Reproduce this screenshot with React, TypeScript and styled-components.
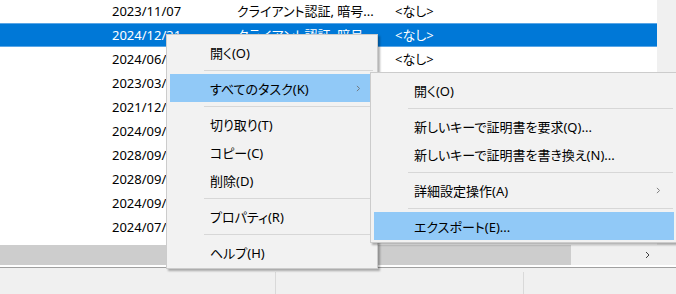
import React from "react";
import styled, { createGlobalStyle } from "styled-components";

const GlobalStyle = createGlobalStyle`
  html, body {
    margin: 0;
    padding: 0;
    background: #f0f0f0;
  }
`;

const Window = styled.div`
  position: relative;
  width: 676px;
  height: 294px;
  overflow: hidden;
  display: flex;
  flex-direction: column;
  background: #f0f0f0;
  font-family: "Noto Sans", "Noto Sans CJK JP", sans-serif;
  font-size: 13px;
  color: #000;
`;

const ListFrame = styled.div`
  display: flex;
  flex-direction: column;
  height: 268px;
  box-sizing: border-box;
  background: #fff;
  padding-bottom: 2px;
  border-bottom: 1px solid #a0a0a0;
`;

const ListBody = styled.div`
  display: flex;
  height: 245px;
`;

const Rows = styled.div`
  flex: 1;
  overflow: hidden;
  padding-top: 0;
`;

const RowsInner = styled.div`
  margin-top: -1px;
`;

const Row = styled.div<{ $selected?: boolean }>`
  display: grid;
  grid-template-columns: 106px 125px 158px 1fr;
  height: 24px;
  line-height: 24px;
  background: ${(p) => (p.$selected ? "#0078d7" : "transparent")};
  color: ${(p) => (p.$selected ? "#fff" : "#000")};
  box-shadow: ${(p) => (p.$selected ? "inset 0 1px #5aa6e6, inset 0 -1px #5aa6e6" : "none")};
`;

const Cell = styled.div`
  padding-left: 6px;
  white-space: nowrap;
  overflow: hidden;
  font-feature-settings: "palt";
`;

const VScroll = styled.div`
  width: 19px;
  background: #f0f0f0;
`;

const HScroll = styled.div`
  display: flex;
  height: 20px;
  background: #f0f0f0;
`;

const HThumb = styled.div`
  width: 571px;
  background: #cdcdcd;
`;

const HTrack = styled.div`
  flex: 1;
`;

const ArrowButton = styled.div`
  width: 20px;
  display: flex;
  align-items: center;
  justify-content: center;
`;

const Corner = styled.div`
  width: 19px;
`;

const StatusBar = styled.div`
  flex: 1;
  display: grid;
  grid-template-columns: 275px 248px 1fr;
`;

const StatusPane = styled.div<{ $divider?: boolean }>`
  margin-top: 4px;
  border-left: ${(p) => (p.$divider ? "1px solid #d9d9d9" : "none")};
`;

const Menu = styled.div<{ $left: number; $top: number; $width: number }>`
  position: absolute;
  left: ${(p) => p.$left}px;
  top: ${(p) => p.$top}px;
  width: ${(p) => p.$width}px;
  box-sizing: border-box;
  padding: 3px 0 2px;
  background: #f2f2f2;
  border: 1px solid #cccccc;
  box-shadow: 2px 2px 2px rgba(0, 0, 0, 0.3);
  font-family: "Noto Sans", "Noto Sans CJK JP", sans-serif;
  font-size: 13px;
`;

const MenuItem = styled.div<{ $active?: boolean }>`
  display: flex;
  align-items: center;
  height: 28px;
  margin: 0 3px;
  padding-left: 40px;
  white-space: nowrap;
  font-feature-settings: "palt";
  background: ${(p) => (p.$active ? "#91c9f7" : "transparent")};
`;

const SubArrow = styled.span`
  display: flex;
  margin-left: auto;
  margin-right: 14px;
`;

const Separator = styled.div`
  height: 8px;
  display: flex;
  align-items: center;

  &::after {
    content: "";
    flex: 1;
    height: 1px;
    margin: 0 4px 0 37px;
    background: #d7d7d7;
  }
`;

const Chevron = ({ color = "#6d6d6d", size = 7 }: { color?: string; size?: number }) => (
  <svg width={size / 2 + 1} height={size} viewBox="0 0 5 8">
    <polyline points="1,1 4,4 1,7" fill="none" stroke={color} strokeWidth="1" />
  </svg>
);

const certs = [
  { name: "", date: "2023/11/07", purpose: "クライアント認証, 暗号...", friendly: "<なし>" },
  { name: "", date: "2024/12/31", purpose: "クライアント認証, 暗号...", friendly: "<なし>", selected: true },
  { name: "", date: "2024/06/30", purpose: "クライアント認証, 暗号...", friendly: "<なし>" },
  { name: "", date: "2023/03/31", purpose: "クライアント認証, 暗号...", friendly: "<なし>" },
  { name: "", date: "2021/12/31", purpose: "クライアント認証, 暗号...", friendly: "<なし>" },
  { name: "", date: "2024/09/30", purpose: "クライアント認証, 暗号...", friendly: "<なし>" },
  { name: "", date: "2028/09/30", purpose: "クライアント認証, 暗号...", friendly: "<なし>" },
  { name: "", date: "2028/09/30", purpose: "クライアント認証, 暗号...", friendly: "<なし>" },
  { name: "", date: "2024/09/30", purpose: "クライアント認証, 暗号...", friendly: "<なし>" },
  { name: "", date: "2024/07/31", purpose: "クライアント認証, 暗号...", friendly: "<なし>" },
  { name: "AIME-CA-2023", date: "2024/10/31", purpose: "クライアント認証, 暗号...", friendly: "   kato@123.local" },
];

type Entry = { label?: string; sep?: boolean; active?: boolean; sub?: boolean };

const mainMenu: Entry[] = [
  { label: "開く(O)" },
  { sep: true },
  { label: "すべてのタスク(K)", active: true, sub: true },
  { sep: true },
  { label: "切り取り(T)" },
  { label: "コピー(C)" },
  { label: "削除(D)" },
  { sep: true },
  { label: "プロパティ(R)" },
  { sep: true },
  { label: "ヘルプ(H)" },
];

const taskMenu: Entry[] = [
  { label: "開く(O)" },
  { sep: true },
  { label: "新しいキーで証明書を要求(Q)..." },
  { label: "新しいキーで証明書を書き換え(N)..." },
  { sep: true },
  { label: "詳細設定操作(A)", sub: true },
  { sep: true },
  { label: "エクスポート(E)...", active: true },
];

const renderMenu = (entries: Entry[]) =>
  entries.map((e, i) =>
    e.sep ? (
      <Separator key={i} />
    ) : (
      <MenuItem key={i} $active={e.active}>
        {e.label}
        {e.sub && (
          <SubArrow>
            <Chevron />
          </SubArrow>
        )}
      </MenuItem>
    )
  );

const App = () => {
  return (
    <>
      <GlobalStyle />
      <Window>
        <ListFrame>
          <ListBody>
            <Rows>
              <RowsInner>
                {certs.map((c, i) => (
                  <Row key={i} $selected={c.selected}>
                    <Cell>{c.name}</Cell>
                    <Cell>{c.date}</Cell>
                    <Cell>{c.purpose}</Cell>
                    <Cell>{c.friendly}</Cell>
                  </Row>
                ))}
              </RowsInner>
            </Rows>
            <VScroll />
          </ListBody>
          <HScroll>
            <HThumb />
            <HTrack />
            <ArrowButton>
              <Chevron color="#404040" size={8} />
            </ArrowButton>
            <Corner />
          </HScroll>
        </ListFrame>
        <StatusBar>
          <StatusPane />
          <StatusPane $divider />
          <StatusPane $divider />
        </StatusBar>

        <Menu $left={166} $top={34} $width={212}>
          {renderMenu(mainMenu)}
        </Menu>
        <Menu $left={370} $top={72} $width={308}>
          {renderMenu(taskMenu)}
        </Menu>
      </Window>
    </>
  );
};

export default App;
